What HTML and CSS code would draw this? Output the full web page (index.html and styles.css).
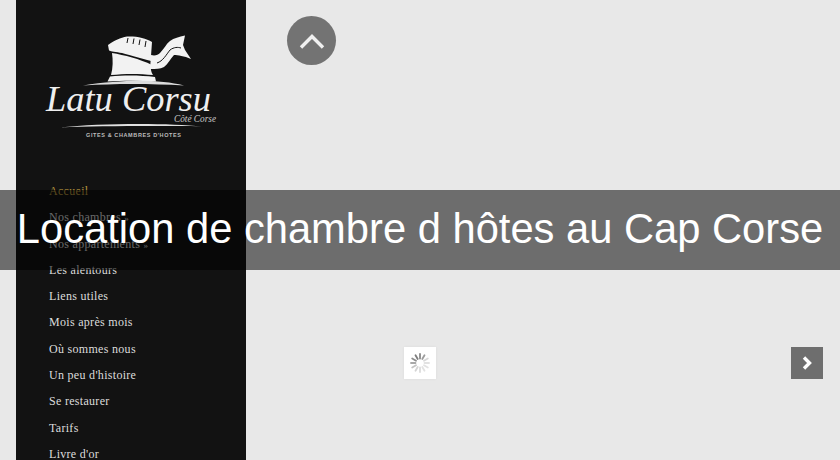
FILE: index.html
```html
<!DOCTYPE html>
<html lang="fr">
<head>
    <meta charset="UTF-8">
    <title>Location de chambre d hôtes au Cap Corse</title>
    <link rel="stylesheet" href="styles.css">
</head>
<body>
    <div class="page">
        <aside class="sidebar">
            <svg class="logo" width="230" height="170" viewBox="16 0 230 170">
                <g class="logo-art">
                    <path fill="#f2f2f2" d="M108 45C115 40 120 38 127 36.500C136 36 146 38 152 42L151 56L155 62C146 60 130 55 122 53C116 52 111 51.500 109 50.500Z"/>
                    <path fill="#f2f2f2" d="M112 53C124 55 140 59 152 65C150 67 151 72 153 75C140 73.500 124 73.500 111 75C113 68 113 60 112 53Z"/>
                    <path fill="#f2f2f2" d="M110 76.500C124 75 140 75 155 77L156 81.500C140 80.500 122 80.500 107.500 81.500Z"/>
                    <path fill="#f2f2f2" d="M151 55C155 56 158 55 160 53C164 49 166 44 170 41C174 38 179 37 185 35.500L183 45L185 50L191 59C184 56 178 55 174 55C170 59 168 64 164 67C160 69 156 69 150 69Z"/>
                    <path fill="none" stroke="#121212" stroke-width="1" d="M157 63C163 61 166 55 170 50C174 47 178 47 181 48M128 38L127 43M134 38.500L133 44M140 39.500L139 45M146 41L145 47"/>
                    <path fill="#dcdcdc" d="M83 85.500C125 79 160 79.500 184 85.500C150 83.500 115 83.500 83 85.500Z"/>
                    <path fill="#e0e0e0" d="M60 127.500C100 123 170 123 202 126.500C170 125.800 100 125.800 60 127.500Z"/>
                </g>
                <text class="logo-name" x="46" y="111" textLength="165" lengthAdjust="spacingAndGlyphs">Latu Corsu</text>
                <text class="logo-place" x="174" y="122" textLength="42" lengthAdjust="spacingAndGlyphs">Côté Corse</text>
                <text class="logo-sub" x="86" y="137" textLength="95" lengthAdjust="spacing">GITES &amp; CHAMBRES D'HOTES</text>
            </svg>
            <nav class="menu">
                <a class="menu-item active" href="#">Accueil</a>
                <a class="menu-item" href="#">Nos chambres <span class="more">»</span></a>
                <a class="menu-item" href="#">Nos appartements <span class="more">»</span></a>
                <a class="menu-item" href="#">Les alentours</a>
                <a class="menu-item" href="#">Liens utiles</a>
                <a class="menu-item" href="#">Mois après mois</a>
                <a class="menu-item" href="#">Où sommes nous</a>
                <a class="menu-item" href="#">Un peu d'histoire</a>
                <a class="menu-item" href="#">Se restaurer</a>
                <a class="menu-item" href="#">Tarifs</a>
                <a class="menu-item" href="#">Livre d'or</a>
            </nav>
        </aside>
        <main class="content">
            <a class="scroll-up" href="#">
                <svg width="26" height="16" viewBox="0 0 26 16">
                    <path fill="none" stroke="#f0f0f0" stroke-width="3.400" d="M2 14.500L13 3.500L24 14.500"/>
                </svg>
            </a>
        </main>
    </div>

    <div class="loader">
        <svg width="20" height="20" viewBox="0 0 20 20">
            <g stroke-width="1.800" stroke-linecap="round">
                <path stroke="#8a8a8a" d="M10 1V5.500"/>
                <path stroke="#9c9c9c" d="M14.500 2.200L12.300 6"/>
                <path stroke="#d8d8d8" d="M17.800 5.500L14 7.700"/>
                <path stroke="#e2e2e2" d="M19 10H14.500"/>
                <path stroke="#e2e2e2" d="M17.800 14.500L14 12.300"/>
                <path stroke="#e2e2e2" d="M14.500 17.800L12.300 14"/>
                <path stroke="#dcdcdc" d="M10 19V14.500"/>
                <path stroke="#d4d4d4" d="M5.500 17.800L7.700 14"/>
                <path stroke="#c4c4c4" d="M2.200 14.500L6 12.300"/>
                <path stroke="#a8a8a8" d="M1 10H5.500"/>
                <path stroke="#8e8e8e" d="M2.200 5.500L6 7.700"/>
                <path stroke="#7c7c7c" d="M5.500 2.200L7.700 6"/>
            </g>
        </svg>
    </div>
    <a class="next" href="#">
        <svg width="10" height="14" viewBox="0 0 10 14">
            <path fill="none" stroke="#ffffff" stroke-width="3.400" d="M2 1.500L7.500 7L2 12.500"/>
        </svg>
    </a>

    <h1 class="title">Location de chambre d hôtes au Cap Corse</h1>
</body>
</html>
```

FILE: styles.css
```css
body {
    margin: 0;
    height: 460px;
    overflow: hidden;
    background-color: #e8e8e8;
    font-family: "Liberation Sans", Arial, sans-serif;
}

.page {
    display: flex;
    height: 460px;
    padding-left: 16px;
}

.sidebar {
    flex: 0 0 230px;
    background-color: #121212;
    overflow: hidden;
}

.logo {
    display: block;
    margin-bottom: 8px;
}

.logo-art {
    filter: blur(0.4px);
}

.logo-name {
    font-family: "Liberation Serif", serif;
    font-style: italic;
    font-size: 36px;
    fill: #efefef;
}

.logo-place {
    font-family: "Liberation Serif", serif;
    font-style: italic;
    font-size: 10px;
    fill: #c8c8c8;
}

.logo-sub {
    font-family: "Liberation Sans", sans-serif;
    font-weight: bold;
    font-size: 5.500px;
    fill: #bdbdbd;
}

.menu {
    display: flex;
    flex-direction: column;
    padding-left: 33px;
}

.menu-item {
    height: 26.300px;
    line-height: 26.300px;
    font-family: "Liberation Serif", serif;
    font-size: 12px;
    letter-spacing: 0.3px;
    color: #dcdcdc;
    text-decoration: none;
    white-space: nowrap;
}

.menu-item.active {
    color: #b8963e;
}

.more {
    font-size: 9px;
}

.content {
    flex: 1;
    padding: 16px 0 0 41px;
}

.scroll-up {
    display: flex;
    align-items: center;
    justify-content: center;
    width: 49px;
    height: 49px;
    border-radius: 50%;
    background-color: #737373;
}

.loader {
    position: absolute;
    left: 404px;
    top: 347px;
    width: 32px;
    height: 32px;
    display: flex;
    align-items: center;
    justify-content: center;
    background-color: #ffffff;
    box-shadow: 0 0 3px rgba(0, 0, 0, 0.06);
}

.next {
    position: absolute;
    left: 791px;
    top: 347px;
    width: 32px;
    height: 32px;
    display: flex;
    align-items: center;
    justify-content: center;
    background-color: #6e6e6e;
}

.title {
    position: absolute;
    left: 0;
    top: 190px;
    width: 840px;
    height: 80px;
    margin: 0;
    background-color: rgba(0, 0, 0, 0.53);
    color: #ffffff;
    font-size: 41.700px;
    font-weight: normal;
    line-height: 78px;
    text-align: center;
    white-space: nowrap;
}
```
